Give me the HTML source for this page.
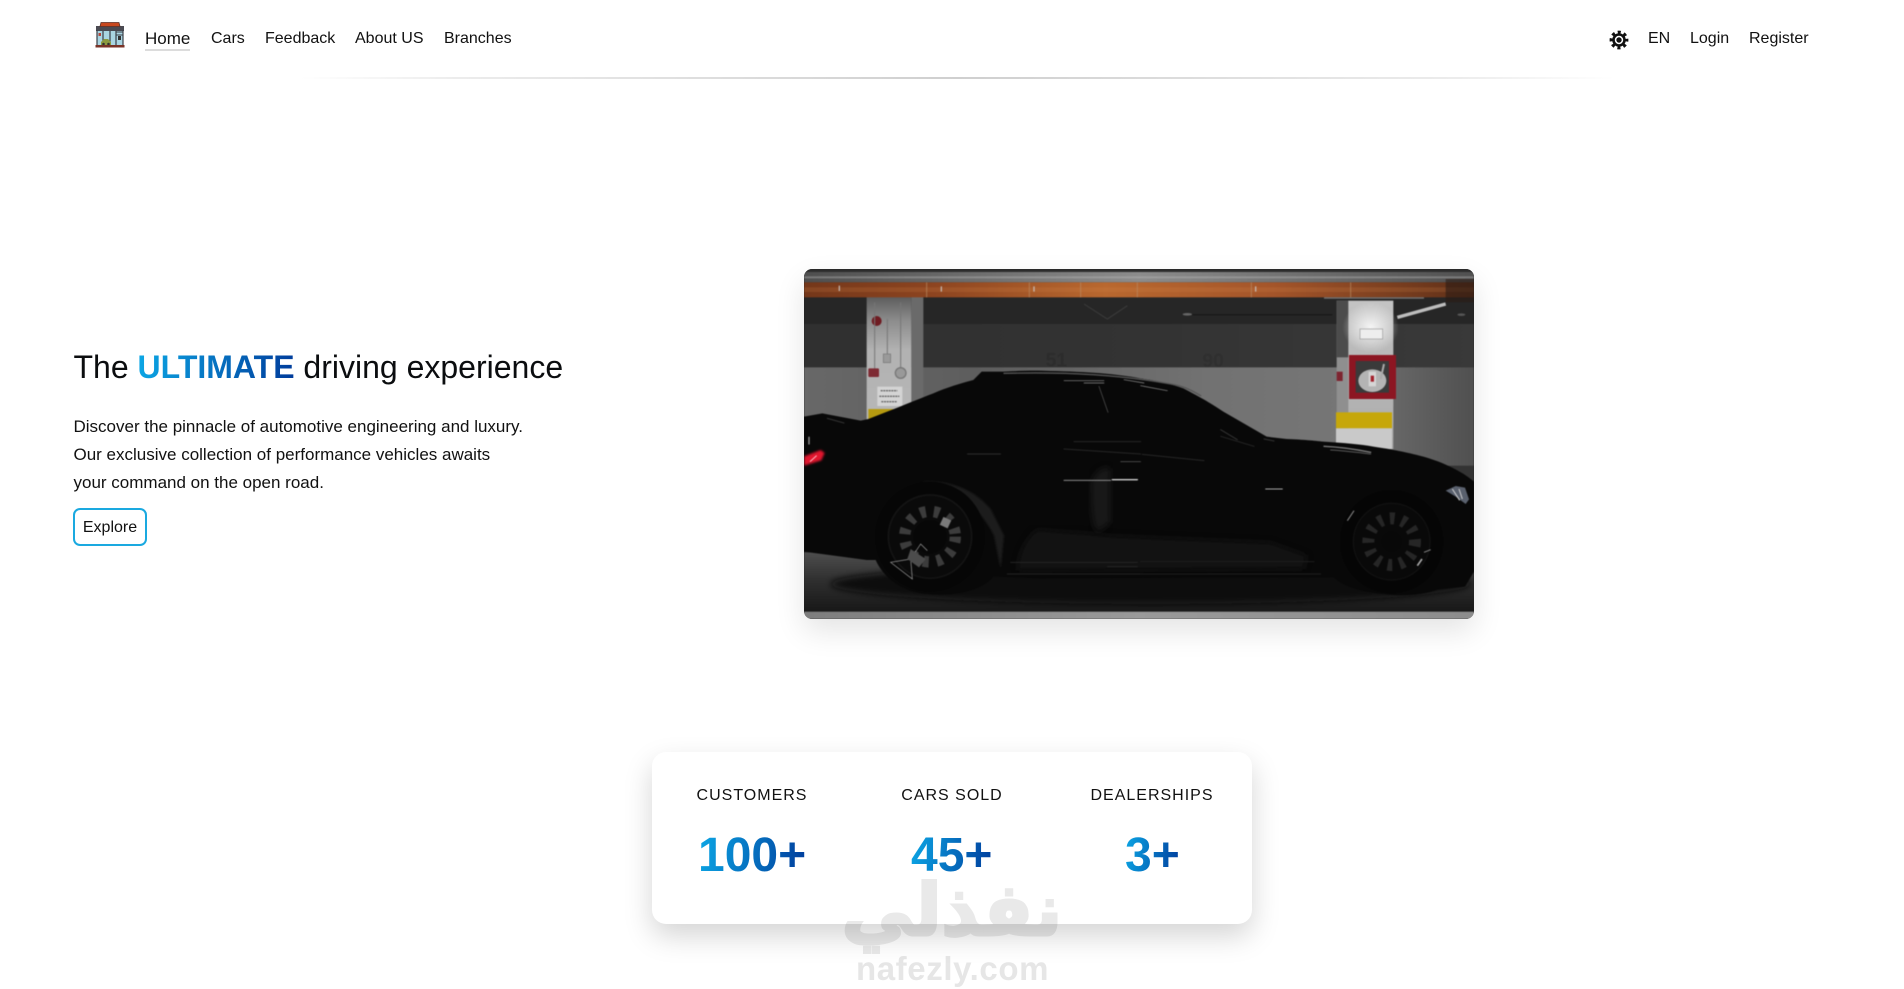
<!DOCTYPE html>
<html lang="en"><head><meta charset="utf-8"><title>Home</title>
<style>
html,body{margin:0;padding:0;background:#fff}
body{width:1904px;height:986px;position:relative;overflow:hidden;font-family:"Liberation Sans",Arial,sans-serif;color:#111}
.a{position:absolute;white-space:nowrap}
.nav{font-size:16px;line-height:20px;top:29px;color:#111}
.grad{background:linear-gradient(100deg,#0ca8e6,#003a9a);-webkit-background-clip:text;background-clip:text;color:transparent;-webkit-text-fill-color:transparent}
.lab{font-size:16px;letter-spacing:1px;line-height:20px;top:786px;width:200px;text-align:center;color:#111}
.num{font-size:48px;font-weight:700;line-height:56px;top:828px;text-align:center}
p{margin:0}
</style></head><body>
<svg class="a" style="left:95px;top:21px" width="30" height="27" viewBox="0 0 30 27">
<rect x="2" y="9" width="26" height="15" fill="#a9d5e2"/>
<path d="M1 5h28v5H1z" fill="#4a4a52"/><path d="M6 1.500h18l1 4H5z" fill="#c8481f" stroke="#5a3028" stroke-width=".8"/>
<path d="M2 9v15M8 10v14M15 10v14M21 10v14M28 9v15" stroke="#3a3f48" stroke-width="1.200"/>
<path d="M21 11h7M21 14h7" stroke="#3a3f48" stroke-width="1"/><rect x="23" y="15" width="3" height="4" fill="#333"/>
<rect x="3.500" y="12" width="2.500" height="3" fill="#b5463a"/>
<path d="M6 24v-3l3-3h4l3 3v3z" fill="#8c9a40"/><circle cx="8.500" cy="23" r="1.300" fill="#333"/><circle cx="13.500" cy="23" r="1.300" fill="#333"/>
<rect x="0.500" y="24" width="29" height="2.500" fill="#7a3327"/></svg>
<span class="a" style="left:145px;top:27px;font-size:17px;line-height:24px;border-bottom:2px solid #dcdcdc;height:22px;color:#111">Home</span>
<span class="a nav" style="left:211px">Cars</span>
<span class="a nav" style="left:265px">Feedback</span>
<span class="a nav" style="left:355px">About US</span>
<span class="a nav" style="left:444px">Branches</span>
<svg class="a" style="left:1608px;top:29px" width="22" height="22" viewBox="-11 -11 22 22">
<circle r="6.800" fill="#111"/><circle r="7.900" fill="none" stroke="#111" stroke-width="3" stroke-dasharray="3.100 3.105" stroke-dashoffset="1.550"/>
<circle r="4.200" fill="#fff"/><circle r="2.700" fill="#111"/></svg>
<span class="a nav" style="left:1648px">EN</span>
<span class="a nav" style="left:1690px">Login</span>
<span class="a nav" style="left:1749px">Register</span>
<div class="a" style="left:300px;top:77px;width:1315px;height:2px;background:linear-gradient(90deg,rgba(225,225,225,0),#ececec 12%,#cfcfcf 50%,#ececec 88%,rgba(225,225,225,0))"></div>

<div class="a" style="left:73.500px;top:347px;font-size:32px;line-height:40px;color:#0b0d0f">The <span class="grad" style="font-weight:700">ULTIMATE</span> driving experience</div>
<div class="a" style="left:73.500px;top:413px;font-size:17px;line-height:28px;color:#111"><p>Discover the pinnacle of automotive engineering and luxury.</p><p>Our exclusive collection of performance vehicles awaits</p><p>your command on the open road.</p></div>
<div class="a" style="left:73px;top:508px;width:74px;height:38px;box-sizing:border-box;border:2px solid #1aa9e0;border-radius:7px;text-align:center;font-size:16px;line-height:36px;color:#111">Explore</div>

<div class="a" style="left:804px;top:269px;width:670px;height:350px;border-radius:8px;box-shadow:0 12px 30px rgba(0,0,0,.11)"></div>
<div class="a" style="left:804px;top:269px;width:670px;height:350px;border-radius:8px;overflow:hidden;background:#222">
<svg width="670" height="350" viewBox="0 0 2010 1050" preserveAspectRatio="none" style="display:block;filter:blur(.6px)">
<defs>
<linearGradient id="or" x1="0" x2="1" y1="0" y2="0"><stop offset="0" stop-color="#74371a"/><stop offset=".2" stop-color="#8e4520"/><stop offset=".45" stop-color="#b9682f"/><stop offset=".7" stop-color="#a4552a"/><stop offset="1" stop-color="#5e2f18"/></linearGradient>
<linearGradient id="si" x1="0" x2="1" y1="0" y2="0"><stop offset="0" stop-color="#4e4e4e"/><stop offset=".5" stop-color="#8c8c8c"/><stop offset="1" stop-color="#505050"/></linearGradient>
<linearGradient id="wl" x1="0" x2="1" y1="0" y2="0"><stop offset="0" stop-color="#686868"/><stop offset=".25" stop-color="#5e5e5e"/><stop offset=".6" stop-color="#727272"/><stop offset=".8" stop-color="#767676"/><stop offset="1" stop-color="#505050"/></linearGradient>
<linearGradient id="wu" x1="0" x2="1" y1="0" y2="0"><stop offset="0" stop-color="#303030"/><stop offset=".5" stop-color="#333"/><stop offset="1" stop-color="#393939"/></linearGradient>
<linearGradient id="fl" x1="0" x2="0" y1="0" y2="1"><stop offset="0" stop-color="#4e4e4e"/><stop offset=".45" stop-color="#303030"/><stop offset="1" stop-color="#171717"/></linearGradient>
<linearGradient id="st" x1="0" x2="1" y1="0" y2="0"><stop offset="0" stop-color="#7e7e7e"/><stop offset=".5" stop-color="#9a9a9a"/><stop offset="1" stop-color="#8d8d8d"/></linearGradient>
<linearGradient id="col" x1="0" x2="0" y1="0" y2="1"><stop offset="0" stop-color="#c4c4c4"/><stop offset=".25" stop-color="#bcbcbc"/><stop offset=".8" stop-color="#b0b0b0"/><stop offset="1" stop-color="#a4a4a4"/></linearGradient>
<linearGradient id="cl1" x1="0" x2="0" y1="0" y2="1"><stop offset="0" stop-color="#5d5d5d"/><stop offset=".18" stop-color="#8d8d8d"/><stop offset=".4" stop-color="#b2b2b2"/><stop offset="1" stop-color="#b8b8b8"/></linearGradient>
<radialGradient id="gl"><stop offset="0" stop-color="#fff" stop-opacity=".85"/><stop offset="1" stop-color="#fff" stop-opacity="0"/></radialGradient>
<filter id="b6"><feGaussianBlur stdDeviation="10"/></filter>
<filter id="b2"><feGaussianBlur stdDeviation="3"/></filter>
</defs>
<rect width="2010" height="1050" fill="#222"/>
<rect x="0" y="84" width="2010" height="84" fill="#262626"/>
<rect x="0" y="165" width="2010" height="130" fill="url(#wu)"/>
<rect x="0" y="295" width="2010" height="305" fill="url(#wl)"/>
<rect x="1780" y="590" width="230" height="60" fill="#333"/>
<text x="725" y="292" font-family="Liberation Sans" font-size="58" font-weight="700" fill="#2c2c2c">51</text>
<text x="1195" y="294" font-family="Liberation Sans" font-size="58" font-weight="700" fill="#2f2f2f">90</text>
<!-- left column -->
<rect x="322" y="84" width="36" height="400" fill="#6a6a6a"/>
<rect x="188" y="84" width="134" height="400" fill="url(#cl1)"/>
<rect x="193" y="420" width="75" height="32" fill="#b59a10"/>
<circle cx="218" cy="156" r="15" fill="#6f1c22"/>
<path d="M212 100v200M290 100v205M250 150v110" stroke="#777" stroke-width="3" fill="none"/>
<rect x="238" y="255" width="22" height="26" fill="#9a9a9a" stroke="#777" stroke-width="2"/>
<rect x="193" y="298" width="32" height="26" rx="3" fill="#7e2a33"/>
<circle cx="290" cy="312" r="16" fill="#999" stroke="#777" stroke-width="4"/>
<rect x="220" y="353" width="75" height="58" fill="#d4d4d4"/>
<path d="M230 365h50M226 382h60M232 398h48" stroke="#666" stroke-width="4" stroke-dasharray="6 2"/>
<!-- right column -->
<rect x="1598" y="95" width="36" height="445" fill="#8f8f8f"/>
<rect x="1598" y="95" width="36" height="170" fill="#4c4c4c"/>
<rect x="1633" y="95" width="135" height="445" fill="url(#col)"/>
<ellipse cx="1700" cy="175" rx="85" ry="75" fill="url(#gl)"/>
<rect x="1596" y="430" width="168" height="48" fill="#c6a70a"/>
<rect x="1596" y="478" width="168" height="62" fill="#c9c9c9"/>
<rect x="1668" y="180" width="68" height="30" fill="#eee" stroke="#999" stroke-width="2"/>
<rect x="1635" y="258" width="141" height="132" fill="#8c1622"/>
<rect x="1655" y="276" width="100" height="95" fill="#3a3a3a"/>
<ellipse cx="1705" cy="335" rx="42" ry="34" fill="#b4b4b4"/>
<rect x="1694" y="308" width="22" height="44" fill="#d6d6d6"/><path d="M1700 320h10v18h-10z" fill="#a3202c"/>
<path d="M1740 285l-10 45" stroke="#aaa" stroke-width="6"/>
<rect x="1598" y="308" width="18" height="28" fill="#7e2430"/>
<path d="M1780 145l145-40" stroke="#bdbdbd" stroke-width="10"/>
<ellipse cx="1150" cy="136" rx="14" ry="4" fill="#666"/><ellipse cx="1972" cy="137" rx="12" ry="4" fill="#555"/>
<path d="M1165 137h420" stroke="#1a1a1a" stroke-width="4"/>
<!-- pipes -->
<rect x="0" y="0" width="2010" height="9" fill="#2c2c2c"/>
<rect x="0" y="9" width="2010" height="31" fill="url(#si)"/>
<rect x="0" y="22" width="2010" height="6" fill="#b8b8b8" opacity=".4"/>
<rect x="0" y="40" width="2010" height="45" fill="url(#or)"/>
<rect x="0" y="55" width="2010" height="14" fill="#d88a4b" opacity=".18"/>
<rect x="1560" y="85" width="300" height="4" fill="#777"/>
<path d="M368 40v45M676 40v45M830 40v45M1000 40v45M1342 40v45M1640 40v45" stroke="#b98a62" stroke-width="3" opacity=".7"/>
<path d="M106 50v16M412 52v16M690 52v16M1355 52v16" stroke="#ccc" stroke-width="4" opacity=".8"/>
<rect x="1925" y="30" width="85" height="70" fill="#2a1a14" opacity=".6"/>
<path d="M840 105l70 45 60-40" fill="none" stroke="#3c3c3c" stroke-width="3"/>
<!-- floor -->
<rect x="0" y="850" width="2010" height="180" fill="url(#fl)"/>
<rect x="0" y="1028" width="2010" height="22" fill="url(#st)"/>
<ellipse cx="1040" cy="945" rx="960" ry="60" fill="#0b0b0b" filter="url(#b6)"/>
<!-- car -->
<path fill="#080808" d="M0 443L55 433L170 455L193 450C260 425 330 395 388 373C430 355 470 343 508 333L533 308L598 308C650 305 700 304 738 306C850 308 940 315 1008 328C1060 335 1100 345 1138 358C1190 385 1225 405 1258 428L1388 503L1448 510C1500 512 1530 515 1558 518C1620 522 1670 526 1708 533C1770 542 1820 552 1858 563C1900 575 1930 588 1958 603C1980 615 1995 625 2010 638L2010 908L1983 953L1900 962C1870 975 1800 985 1740 975C1680 970 1620 955 1590 925L700 928L568 923C540 960 460 985 370 975C300 970 240 930 215 873L188 873L0 848Z"/>
<path d="M700 780C780 790 860 790 920 800L1400 820L1510 860L1500 900L640 905C640 860 660 810 700 780Z" fill="#141414" filter="url(#b6)" opacity=".75"/>
<path d="M860 640C880 600 900 590 920 600L920 760L880 790C860 760 860 700 860 640Z" fill="#1a1a1a" filter="url(#b6)" opacity=".8"/>
<path d="M330 640C420 630 520 700 570 800L590 900L600 800L560 720C500 650 420 630 330 640Z" fill="#1c1c1c" filter="url(#b2)"/>
<!-- highlights -->
<g fill="none" stroke-linecap="round">
<path d="M600 313C800 308 950 318 1100 345C1140 352 1160 362 1190 380" stroke="#555" stroke-width="4"/>
<path d="M780 335h120M840 342h60M960 332l60 10M1010 350l80 15" stroke="#8d8d8d" stroke-width="2"/>
<path d="M885 352L912 430" stroke="#555" stroke-width="2"/>
<path d="M780 540L1010 555M810 518h200" stroke="#262626" stroke-width="3"/>
<path d="M1015 556L1200 575" stroke="#262626" stroke-width="3"/>
<path d="M780 634H920" stroke="#8a8a8a" stroke-width="3"/><path d="M925 632H1000" stroke="#cfcfcf" stroke-width="4"/>
<path d="M950 578h60" stroke="#666" stroke-width="2"/>
<path d="M1385 660h50" stroke="#a8a8a8" stroke-width="3"/>
<path d="M1250 502l100 30" stroke="#262626" stroke-width="3"/>
<path d="M1560 532c50 2 90 8 140 18" stroke="#7a7a7a" stroke-width="4"/><path d="M1580 543c40 2 70 6 120 12" stroke="#5a5a5a" stroke-width="3"/>
<path d="M1300 512l-50-30M1380 510l30 6" stroke="#333" stroke-width="3"/>
<path d="M620 880H1000M610 915H1010M910 893h90" stroke="#242424" stroke-width="3"/>
<path d="M1010 915H1550M1010 878H1530" stroke="#1e1e1e" stroke-width="3"/>
<path d="M490 555h100" stroke="#3a3a3a" stroke-width="2"/>
<path d="M15 505v20" stroke="#999" stroke-width="4"/>
<path d="M70 448l50 14" stroke="#333" stroke-width="3"/>
</g>
<!-- headlight -->
<path d="M1925 665l30-14 28 5 12 35-10 14-30-22z" fill="#5a616e"/><path d="M1945 660l22 34M1965 660l10 30" stroke="#d0d0d0" stroke-width="3"/>
<!-- taillight -->
<path d="M0 562L50 543L62 552L52 574L0 590Z" fill="#e2122e" filter="url(#b2)"/>
<path d="M18 578L38 560" stroke="#ffb9c2" stroke-width="3"/>
<!-- rear wheel -->
<circle cx="378" cy="803" r="165" fill="#060606"/>
<circle cx="378" cy="803" r="125" fill="#0a0a0a" stroke="#141414" stroke-width="5"/>
<circle cx="378" cy="803" r="76" fill="none" stroke="#3c3c3c" stroke-width="34" stroke-dasharray="17 24"/>
<circle cx="378" cy="803" r="50" fill="#070707"/>
<path d="M260 880l60-10 5 60zM320 870l30-45 20 20" fill="none" stroke="#a0a0a0" stroke-width="2"/>
<path d="M320 840l45 30-20 25-35-25z" fill="#4c4c4c"/>
<rect x="412" y="748" width="26" height="26" fill="#7a7a7a" transform="rotate(25 425 760)"/>
<!-- front wheel -->
<circle cx="1763" cy="818" r="155" fill="#050505"/>
<circle cx="1763" cy="818" r="115" fill="#090909" stroke="#111" stroke-width="4"/>
<circle cx="1763" cy="818" r="70" fill="none" stroke="#262626" stroke-width="36" stroke-dasharray="14 22"/>
<circle cx="1763" cy="818" r="30" fill="#080808"/>
<path d="M1630 755l20-30M1860 850l20-8" stroke="#888" stroke-width="3"/><path d="M1840 890l14-20" stroke="#aaa" stroke-width="5"/>
</svg></div>

<div class="a" style="left:652px;top:752px;width:600px;height:172px;background:#fff;border-radius:14px;box-shadow:0 12px 28px rgba(0,0,0,.17)"></div>
<div class="a lab" style="left:652px">CUSTOMERS</div>
<div class="a lab" style="left:852px">CARS SOLD</div>
<div class="a lab" style="left:1052px">DEALERSHIPS</div>
<div class="a num grad" style="left:698px;width:108px">100+</div>
<div class="a num grad" style="left:911px;width:81px">45+</div>
<div class="a num grad" style="left:1125px;width:54px">3+</div>

<div class="a" style="left:847px;top:867px;width:215px;text-align:center;font-family:'DejaVu Sans',sans-serif;font-weight:700;font-size:72px;line-height:86px;color:#e9e9e9;-webkit-text-stroke:3px #e9e9e9;mix-blend-mode:multiply" dir="rtl" lang="ar">نفذلي</div>
<div class="a" style="left:850px;top:949px;width:205px;text-align:center;font-weight:700;font-size:33px;line-height:40px;letter-spacing:.6px;color:#e6e6e6;mix-blend-mode:multiply">nafezly.com</div>
</body></html>
